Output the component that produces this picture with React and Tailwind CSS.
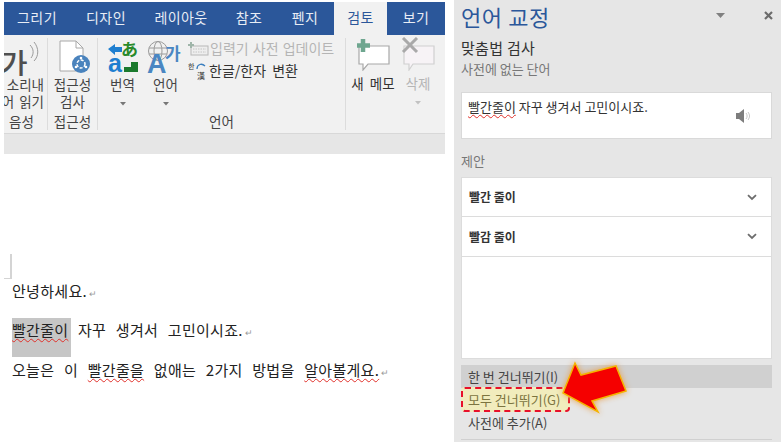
import React from "react";

const KR = "font-['Noto_Sans_CJK_KR','Noto_Sans',sans-serif]";

function Wavy({ children }) {
  return <span className="underline decoration-wavy decoration-[#e0302a] decoration-1 underline-offset-2">{children}</span>;
}

function Para() {
  return <span className="ml-0.5 text-[9px] text-[#9a9a9a]">↵</span>;
}

function Chevron() {
  return (
    <svg width="10" height="7" viewBox="0 0 10 7" className="mr-[14px]">
      <path d="M1 1.2 L5 5 L9 1.2" fill="none" stroke="#6d6d6d" strokeWidth="1.8" />
    </svg>
  );
}

function Caret({ color = "#777" }) {
  return (
    <svg width="6" height="4" viewBox="0 0 6 4"><path d="M0 0H6L3 3.5Z" fill={color} /></svg>
  );
}

function Ribbon() {
  return (
    <div className="flex h-[99px] shrink-0 bg-[#f1f1f1] border-b border-[#d8d8d8] text-[13.5px] leading-[17px] text-[#444] [word-spacing:2px]">
      {/* 음성 */}
      <div className="w-[44px] flex flex-col items-center border-r border-[#dcdcdc] overflow-hidden my-[3px]">
        <div className="h-[40px] w-full relative overflow-hidden">
          <span className="absolute -left-[4px] top-[7px] text-[30px] leading-[34px] font-medium text-[#4f4f4f]">가</span>
          <svg width="14" height="24" viewBox="0 0 14 24" className="absolute left-[24px] top-[3px]">
            <path d="M2 4 C6 8 6 13 3 17 M6 1 C11 7 11 15 6 20" fill="none" stroke="#9a9a9a" strokeWidth="1" />
          </svg>
        </div>
        <div className="w-full flex flex-col items-end h-[37px] whitespace-nowrap pr-[3px] overflow-hidden"><span>소리내</span><span>어 읽기</span></div>
        <div className="mt-[2px] pr-[8px]">음성</div>
      </div>
      {/* 접근성 */}
      <div className="w-[50px] flex flex-col items-center border-r border-[#dcdcdc] my-[3px]">
        <div className="h-[40px] w-full flex justify-center">
          <svg width="34" height="34" viewBox="0 0 34 34" className="mt-[2px]">
            <path d="M4 1H20L27 8V31H4Z" fill="#fff" stroke="#a8a8a8" />
            <path d="M20 1V8H27" fill="none" stroke="#a8a8a8" />
            <circle cx="25" cy="24" r="9" fill="#4a83bd" />
            <circle cx="25" cy="24" r="4" fill="none" stroke="#fff" strokeWidth="1.5" strokeDasharray="3 1.5" />
            <circle cx="25" cy="18" r="1.3" fill="#fff" />
            <circle cx="20" cy="27" r="1.3" fill="#fff" />
            <circle cx="30" cy="27" r="1.3" fill="#fff" />
          </svg>
        </div>
        <div className="h-[37px] flex flex-col items-center whitespace-nowrap"><span>접근성</span><span>검사</span></div>
        <div className="mt-[2px]">접근성</div>
      </div>
      {/* 언어 */}
      <div className="w-[248px] flex flex-col border-r border-[#dcdcdc] my-[3px]">
        <div className="flex flex-1">
          <div className="w-[47px] pl-[2px] flex flex-col items-center">
            <svg width="32" height="34" viewBox="0 0 32 34" className="mt-[2px] mb-[2px]">
              <path d="M1 9L8 4V7H15V12H8V15Z" fill="#1f7fd0" />
              <text x="1" y="32" fontSize="25" fontWeight="bold" fill="#1f7fd0" fontFamily="Liberation Sans">a</text>
              <text x="14" y="16" fontSize="17" fontWeight="bold" fill="#2a8a2a" fontFamily="Noto Sans CJK JP">あ</text>
              <path d="M31 22V32H17V27H24V22Z" fill="#1b7a2d" />
            </svg>
            <span>번역</span>
            <div className="mt-[9px] flex"><Caret /></div>
          </div>
          <div className="w-[41px] flex flex-col items-center">
            <svg width="38" height="34" viewBox="0 0 38 34" className="mt-[2px] mb-[2px]">
              <circle cx="11" cy="11" r="9.5" fill="none" stroke="#9a9a9a" />
              <ellipse cx="11" cy="11" rx="4" ry="9.5" fill="none" stroke="#9a9a9a" />
              <path d="M2 8H20M2 14H20" stroke="#9a9a9a" />
              <text x="0" y="33" fontSize="27" fontWeight="bold" fill="#4a86c2" fontFamily="Liberation Sans">A</text>
              <text x="18" y="20" fontSize="17" fontWeight="bold" fill="#4a86c2" fontFamily="Noto Sans CJK KR">가</text>
            </svg>
            <span>언어</span>
            <div className="mt-[9px] flex"><Caret /></div>
          </div>
          <div className="flex flex-col whitespace-nowrap ml-[2px]">
            <div className="h-[21px] flex items-center text-[#b5b5b5] text-[14px] [word-spacing:1px]">
              <svg width="21" height="14" viewBox="0 0 21 14" className="mr-[1px]">
                <rect x="3" y="4" width="17" height="9" fill="#eee" stroke="#b8b8b8" />
                <path d="M5 7H18M5 10H18" stroke="#c4c4c4" strokeDasharray="1.5 1" />
                <path d="M3 0V6M0 3H6" stroke="#9fb5a9" strokeWidth="2" />
              </svg>
              입력기 사전 업데이트
            </div>
            <div className="h-[23px] flex items-center text-[#333] text-[14px] [word-spacing:3px]">
              <span className="w-[20px] relative h-[18px] mr-[1px]">
                <span className="absolute left-0 top-0 text-[7px] leading-[9px]">한</span>
                <span className="absolute left-[9px] top-[9px] text-[8px] leading-[9px] font-['Noto_Sans_CJK_TC']">漢</span>
                <svg width="10" height="8" viewBox="0 0 10 8" className="absolute left-[8px] top-0"><path d="M1 7C1 2 6 1 9 4" fill="none" stroke="#3b7fbf" strokeWidth="1.3" /></svg>
              </span>
              한글/한자 변환
            </div>
          </div>
        </div>
        <div className="h-[21px] pt-[3px] text-center leading-[19px]">언어</div>
      </div>
      {/* 메모 */}
      <div className="flex-1 flex pl-[2px] pt-[2px]">
        <div className="w-[50px] flex flex-col items-center">
          <svg width="36" height="34" viewBox="0 0 36 34">
            <path d="M4 9H34V27H13L8 33V27H4Z" fill="#fff" stroke="#a8a8a8" strokeWidth="1.2" />
            <path d="M8 2V15M2 8.5H15" stroke="#6ea68f" strokeWidth="4.5" />
          </svg>
          <span className="mt-[4px] whitespace-nowrap text-[#333] [word-spacing:3px]">새 메모</span>
        </div>
        <div className="w-[36px] ml-[2px] flex flex-col items-center">
          <svg width="34" height="34" viewBox="0 0 34 34">
            <path d="M3 9H33V27H12L8 33V27H3Z" fill="#f7f3f6" stroke="#d0d0d0" strokeWidth="1.2" />
            <path d="M2 1L16 15M16 1L2 15" stroke="#a9a9a9" strokeWidth="3" />
          </svg>
          <span className="mt-[4px] text-[#b5b5b5]">삭제</span>
          <div className="mt-[9px] flex"><Caret color="#c2c2c2" /></div>
        </div>
      </div>
    </div>
  );
}

function Tabs() {
  return (
    <div className="flex h-[33px] shrink-0 bg-[#2b579a] text-[14px] text-[#e8edf5] tracking-[0.4px]">
      <div className="w-[66px] pb-[3px] flex items-center justify-center">그리기</div>
      <div className="w-[72px] pb-[3px] flex items-center justify-center">디자인</div>
      <div className="w-[78px] pb-[3px] flex items-center justify-center">레이아웃</div>
      <div className="w-[58px] pb-[3px] flex items-center justify-center">참조</div>
      <div className="w-[54px] pb-[3px] flex items-center justify-center">펜지</div>
      <div className="w-[53px] ml-[2px] pb-[3px] flex items-center justify-center bg-[#f1f1f1] text-[#2b579a]">검토</div>
      <div className="flex-1 pb-[3px] flex items-center justify-center">보기</div>
    </div>
  );
}

function Doc() {
  return (
    <div className="relative flex-1 bg-white text-[15px] text-[#222] pl-[8px] pt-[127px] tracking-[0.3px]">
      <div className="absolute left-0 top-[100px] w-[8px] h-[25px] border-r-2 border-b border-[#d4d4d4]" />
      <div className="h-[37px] leading-[20px]">안녕하세요.<Para /></div>
      <div className="flex h-[42px] leading-[20px] whitespace-nowrap">
        <div className="bg-[#c6c6c6] h-[39px] w-[59px] pt-[2px]"><Wavy>빨간줄이</Wavy></div>
        <div className="ml-[7px] pt-[2px] [word-spacing:6px]">자꾸 생겨서 고민이시죠.<Para /></div>
      </div>
      <div className="whitespace-nowrap leading-[20px] [word-spacing:6px]">
        오늘은 이 <Wavy>빨간줄을</Wavy> 없애는 2가지 방법을 <Wavy>알아볼게요.</Wavy><Para />
      </div>
    </div>
  );
}

function Panel() {
  return (
    <div className="relative w-[327px] ml-[9px] bg-[#e6e6e6] flex flex-col pl-[7px] pr-[9px] text-[#444]">
      <div className="flex items-center h-[30px] shrink-0 pt-[1px]">
        <span className="text-[22px] leading-[28px] text-[#2b579a] tracking-[0.6px]">언어 교정</span>
        <div className="ml-auto mr-[39px] flex"><svg width="9" height="5" viewBox="0 0 9 5"><path d="M0 0H9L4.5 5Z" fill="#808080" /></svg></div>
        <svg width="9" height="9" viewBox="0 0 9 9" className="mr-[-1px]"><path d="M1 1L8 8M8 1L1 8" stroke="#6b6b6b" strokeWidth="2.2" /></svg>
      </div>
      <div className="mt-[8px] shrink-0 text-[15px] leading-[20px] text-[#333] tracking-[0.3px]">맞춤법 검사</div>
      <div className="mt-[2px] shrink-0 text-[13px] leading-[18px] text-[#777]">사전에 없는 단어</div>
      <div className="mt-[14px] h-[47px] shrink-0 flex bg-white border border-[#d9d9d9] pl-[6px] pt-[4px] text-[13px] text-[#333] leading-[20px] whitespace-nowrap">
        <div><Wavy>빨간줄이</Wavy> 자꾸 생겨서 고민이시죠.</div>
        <svg width="16" height="16" viewBox="0 0 16 16" className="ml-auto mr-[20px] mt-[11px]">
          <path d="M1 5H4L9 1V15L4 11H1Z" fill="#7d7d7d" />
          <path d="M11 5C12.5 7 12.5 9 11 11M13 4C15 7 15 9 13 12" fill="none" stroke="#b5b5b5" strokeWidth="0.8" />
        </svg>
      </div>
      <div className="mt-[13px] h-[18px] shrink-0 text-[13px] leading-[18px] text-[#777]">제안</div>
      <div className="mt-[7px] h-[182px] shrink-0 bg-white border border-[#dcdcdc] flex flex-col text-[12px] font-bold text-[#333]">
        <div className="h-[39px] flex items-center pl-[7px] justify-between border-b border-[#dcdcdc]"><span>빨간 줄이</span><Chevron /></div>
        <div className="h-[40px] flex items-center pl-[7px] justify-between border-b border-[#dcdcdc]"><span>빨감 줄이</span><Chevron /></div>
      </div>
      <div className="mt-[6px] h-[23px] shrink-0 bg-[#d0d0d0] pl-[7px] text-[13px] leading-[23px] whitespace-nowrap">한 번 건너뛰기(I)</div>
      <div className="h-[25px] w-[109px] shrink-0 -mt-[1px] bg-[#f1ecbd] border-2 border-dashed border-[#e8102a] rounded-[4px] pl-[5px] text-[13px] leading-[21px] text-[#7c7440] whitespace-nowrap">모두 건너뛰기(G)</div>
      <div className="h-[22px] shrink-0 pl-[7px] text-[13px] leading-[22px] whitespace-nowrap">사전에 추가(A)</div>
      <div className="mt-[5px] shrink-0 border-t border-[#d0d0d0]" />
      <svg width="80" height="66" viewBox="0 0 80 66" className="absolute left-[100px] top-[355px] overflow-visible">
        <path d="M9 38 L21 8 L27 20 L62 11 L72 36 L38 46 L44 57 Z" fill="#f50000" stroke="#f4b400" strokeWidth="1.5" strokeLinejoin="miter" style={{ filter: "drop-shadow(0 0 3px #e8a050)" }} />
      </svg>
    </div>
  );
}

export default function App() {
  return (
    <div className={`w-[781px] h-[442px] overflow-hidden bg-white flex ${KR}`}>
      <div className="w-[441px] ml-[4px] pt-[2px] flex flex-col">
        <Tabs />
        <Ribbon />
        <div className="h-[20px] shrink-0 bg-[#e6e6e6]" />
        <Doc />
      </div>
      <Panel />
    </div>
  );
}
